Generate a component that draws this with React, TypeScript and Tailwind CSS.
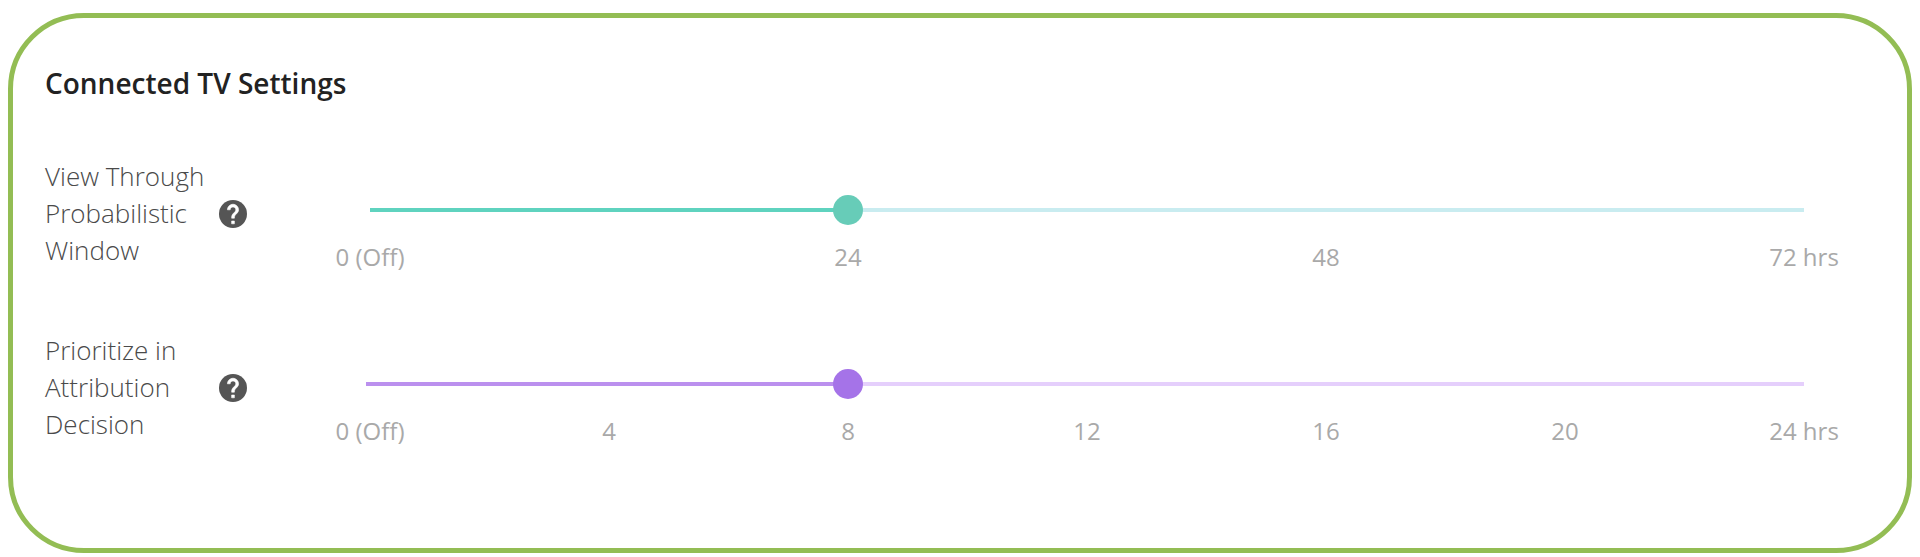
import { useState } from "react"

interface SettingSliderProps {
  id: string
  label: string
  max: number
  step: number
  initial: number
  ticks: string[]
  trackClass: string
  fillClass: string
  thumbClass: string
}

function HelpIcon() {
  return (
    <svg viewBox="2 2 20 20" className="size-7" aria-hidden="true">
      <circle cx="12" cy="12" r="10" fill="#555555" />
      <path
        d="M13 19h-2v-2h2v2zm2.07-7.75l-.9.92C13.45 12.9 13 13.5 13 15h-2v-.5c0-1.1.45-2.1 1.17-2.83l1.24-1.26c.37-.36.59-.86.59-1.41 0-1.1-.9-2-2-2s-2 .9-2 2H8c0-2.21 1.79-4 4-4s4 1.79 4 4c0 .88-.36 1.68-.93 2.25z"
        fill="#ffffff"
        stroke="#ffffff"
        strokeWidth="0.4"
      />
    </svg>
  )
}

function SettingSlider({
  id,
  label,
  max,
  step,
  initial,
  ticks,
  trackClass,
  fillClass,
  thumbClass,
}: SettingSliderProps) {
  const [value, setValue] = useState(initial)

  return (
    <div className="flex items-start">
      <div className="flex w-[325px] shrink-0 items-center">
        <label
          htmlFor={id}
          className="w-[174px] pr-2 text-[26px] leading-[37px] font-light text-[#4a4a4a]"
        >
          {label}
        </label>
        <button type="button" aria-label={`About ${label}`} className="cursor-pointer">
          <HelpIcon />
        </button>
      </div>

      <div className="flex min-w-0 flex-1 flex-col gap-4 pt-9">
        <div className="grid h-8 items-center">
          <div className={`col-start-1 row-start-1 h-1 ${trackClass}`}>
            <div className={`h-full ${fillClass}`} style={{ width: `${(value / max) * 100}%` }} />
          </div>
          {/* Input overhangs by half a thumb so the thumb centre lands on the track ends */}
          <input
            id={id}
            type="range"
            min={0}
            max={max}
            step={step}
            value={value}
            onChange={e => setValue(Number(e.target.value))}
            className={`col-start-1 row-start-1 -mx-[15px] h-8 cursor-pointer appearance-none bg-transparent [&::-webkit-slider-thumb]:size-[30px] [&::-webkit-slider-thumb]:appearance-none [&::-webkit-slider-thumb]:rounded-full ${thumbClass}`}
          />
        </div>

        {/* Zero-width ticks, centred on their point of the track */}
        <div className="flex justify-between text-[24px] leading-[30px] text-[#a9a9a9]">
          {ticks.map(tick => (
            <span key={tick} className="flex w-0 justify-center whitespace-nowrap">
              {tick}
            </span>
          ))}
        </div>
      </div>
    </div>
  )
}

export default function App() {
  return (
    <main className="bg-white px-2 pt-[13px] pb-1 font-['Open_Sans',sans-serif]">
      <section className="rounded-[76px] border-5 border-[#93bd54] pt-[47px] pr-[103px] pb-[102px] pl-8">
        <h1 className="text-[28px] leading-9 font-semibold text-[#222222]">Connected TV Settings</h1>

        <div className="mt-[57px] flex flex-col gap-[60px]">
          <SettingSlider
            id="view-through"
            label="View Through Probabilistic Window"
            max={72}
            step={1}
            initial={24}
            ticks={["0 (Off)", "24", "48", "72 hrs"]}
            trackClass="bg-[#c9ecf0]"
            fillClass="bg-[#5fd3bf]"
            thumbClass="[&::-webkit-slider-thumb]:bg-[#67ccb8]"
          />
          <SettingSlider
            id="attribution"
            label="Prioritize in Attribution Decision"
            max={24}
            step={1}
            initial={8}
            ticks={["0 (Off)", "4", "8", "12", "16", "20", "24 hrs"]}
            trackClass="-ml-1 bg-[#e5cffc]"
            fillClass="bg-[#bb90ee]"
            thumbClass="[&::-webkit-slider-thumb]:bg-[#a573e8]"
          />
        </div>
      </section>
    </main>
  )
}
